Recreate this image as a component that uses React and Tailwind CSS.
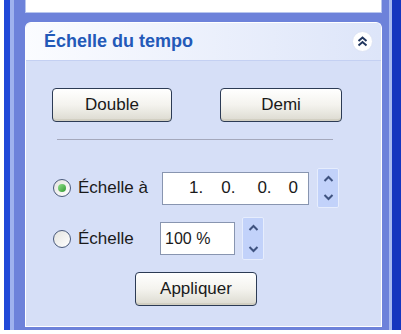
import React from "react";

function Radio({ checked }) {
  return (
    <div className="w-[18px] h-[18px] rounded-full border border-[#4a5a7a] bg-gradient-to-br from-[#e4e4e0] to-white flex items-center justify-center shrink-0">
      {checked && (
        <div className="w-[8px] h-[8px] rounded-full bg-gradient-to-br from-[#8fe08a] to-[#2f9a2f]" />
      )}
    </div>
  );
}

function Spinner({ h }) {
  return (
    <div className={`w-[22px] ${h} bg-[#c2d2fa] border border-[#e6edfd] rounded-[2px] flex flex-col items-center justify-between py-[6px]`}>
      <svg width="11" height="7" viewBox="0 0 11 7"><path d="M1.5 6 L5.5 2 L9.5 6" fill="none" stroke="#3f5380" strokeWidth="2" /></svg>
      <svg width="11" height="7" viewBox="0 0 11 7"><path d="M1.5 1 L5.5 5 L9.5 1" fill="none" stroke="#3f5380" strokeWidth="2" /></svg>
    </div>
  );
}

function XpButton({ children, w }) {
  return (
    <button className={`${w} h-[34px] rounded-[4px] border border-[#2c3b55] bg-gradient-to-b from-white via-[#f4f3ee] to-[#dcdad0] text-[17px] text-[#1a1a1a] shadow-[inset_0_-2px_0_#d2cfc2]`}>
      {children}
    </button>
  );
}

export default function App() {
  return (
    <div className="w-[401px] h-[334px] bg-white overflow-hidden" style={{ fontFamily: "'Liberation Sans', Arial, sans-serif" }}>
      <div className="ml-[4px] h-[330px] flex border-l-[6px] border-l-[#2048d8] border-r-[9px] border-r-[#1636bf]">
        <div className="flex-1 flex flex-col bg-[#6d82da] border-l-[4px] border-l-[#9fb2ee] border-r-[3px] border-r-[#a9baf0] pl-[11px] pr-[7px]">
          {/* previous panel */}
          <div className="h-[13px] bg-white border-x border-b border-[#b8c6ee]" />
          <div className="mt-[9px] flex-1 flex flex-col rounded-t-[6px] overflow-hidden border border-b-0 border-white bg-[#d6dff7]">
            {/* header */}
            <div className="h-[38px] flex items-center justify-between pl-[18px] pr-[8px] bg-gradient-to-r from-[#fbfcff] to-[#dde5f9] border-b border-[#c4d0f2]">
              <span className="text-[18px] font-bold text-[#2359b8]">Échelle du tempo</span>
              <div className="w-[21px] h-[21px] rounded-full bg-white border border-[#dde4f5] flex items-center justify-center">
                <svg width="11" height="11" viewBox="0 0 11 11">
                  <path d="M1.5 5 L5.5 1.5 L9.5 5 M1.5 9.5 L5.5 6 L9.5 9.5" fill="none" stroke="#22375f" strokeWidth="2" />
                </svg>
              </div>
            </div>
            {/* body */}
            <div className="flex-1 flex flex-col border-b border-white">
              <div className="mt-[27px] ml-[26px] flex gap-[48px]">
                <XpButton w="w-[120px]">Double</XpButton>
                <XpButton w="w-[122px]">Demi</XpButton>
              </div>
              <div className="mt-[17px] ml-[31px] w-[276px] h-px bg-[#a4a8bc]" />
              <div className="mt-[28px] ml-[27px] flex items-center">
                <Radio checked />
                <span className="ml-[7px] w-[84px] text-[17px] text-[#1a1a1a]">Échelle à</span>
                <div className="w-[147px] h-[33px] bg-white border border-[#8895b0] flex items-center text-[17px] text-[#1a1a1a]">
                  <span className="ml-[26px]">1.</span>
                  <span className="ml-[18px]">0.</span>
                  <span className="ml-[22px]">0.</span>
                  <span className="ml-[17px]">0</span>
                </div>
                <div className="ml-[8px]">
                  <Spinner h="h-[40px]" />
                </div>
              </div>
              <div className="mt-[9px] ml-[27px] flex items-center">
                <Radio />
                <span className="ml-[7px] w-[82px] text-[17px] text-[#1a1a1a]">Échelle</span>
                <div className="w-[75px] h-[33px] bg-white border border-[#8895b0] flex items-center pl-[4px] text-[16px] text-[#1a1a1a]">
                  100 %
                </div>
                <div className="ml-[7px]">
                  <Spinner h="h-[43px]" />
                </div>
              </div>
              <div className="mt-[12px] ml-[109px]">
                <XpButton w="w-[122px]">Appliquer</XpButton>
              </div>
            </div>
          </div>
          <div className="h-[3px]" />
        </div>
      </div>
    </div>
  );
}
